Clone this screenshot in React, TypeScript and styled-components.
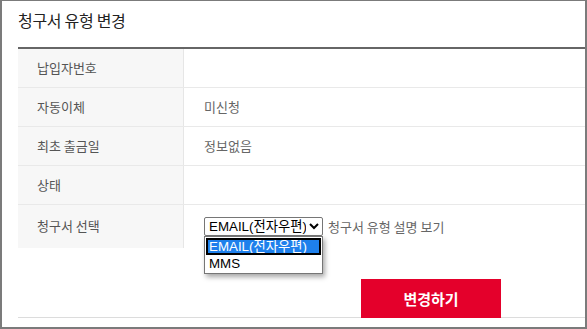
import React from 'react';
import styled, { createGlobalStyle } from 'styled-components';

const GlobalStyle = createGlobalStyle`
  html, body {
    margin: 0;
    padding: 0;
    background: #fff;
  }
  * {
    box-sizing: border-box;
  }
`;

const Frame = styled.div`
  width: 587px;
  height: 329px;
  border: 2px solid #7b7b7b;
  border-top-width: 1px;
  padding-left: 16px;
  background: #fff;
  font-family: 'Noto Sans CJK KR', 'Noto Sans', sans-serif;
  overflow: hidden;
`;

const Title = styled.h2`
  margin: 0;
  height: 46px;
  padding-top: 7px;
  font-size: 16px;
  line-height: 24px;
  font-weight: 400;
  color: #222;
  letter-spacing: -0.3px;
`;

const Table = styled.div`
  border-top: 2px solid #666;
`;

const Row = styled.div<{ $last?: boolean }>`
  display: grid;
  grid-template-columns: 166px 1fr;
  height: ${(p) => (p.$last ? '43px' : '39px')};
  border-bottom: ${(p) => (p.$last ? 'none' : '1px solid #e9e9e9')};
  align-items: stretch;
`;

const Label = styled.div<{ $top?: boolean }>`
  display: flex;
  align-items: ${(p) => (p.$top ? 'flex-start' : 'center')};
  padding: ${(p) => (p.$top ? '11px 0 0 19px' : '0 0 0 19px')};
  background: #f7f7f7;
  border-right: 1px solid #e6e6e6;
  font-size: 13px;
  line-height: 20px;
  color: #555;
`;

const Value = styled.div<{ $top?: boolean }>`
  display: flex;
  align-items: ${(p) => (p.$top ? 'flex-start' : 'center')};
  padding: ${(p) => (p.$top ? '12px 0 0 20px' : '0 0 0 20px')};
  font-size: 13px;
  line-height: 20px;
  color: #666;
`;

const SelectWrap = styled.div`
  position: relative;
  display: flex;
  align-items: center;
`;

const NativeSelect = styled.select`
  width: 119px;
  height: 19px;
  padding: 0;
  font-family: 'Liberation Sans', Arial, 'Noto Sans CJK KR', sans-serif;
  font-size: 13.33px;
  color: #000;
  border: 1px solid #767676;
  border-radius: 2px;
  background: #fff;
`;

const Hint = styled.span`
  margin-left: 5px;
  font-size: 13px;
  color: #666;
`;

const Dropdown = styled.ul`
  position: absolute;
  top: 19px;
  left: 0;
  width: 119px;
  margin: 0;
  padding: 1px;
  list-style: none;
  background: #fff;
  border: 1px solid #767676;
  box-shadow: 2px 3px 5px rgba(0, 0, 0, 0.35);
  font-family: 'Liberation Sans', Arial, 'Noto Sans CJK KR', sans-serif;
  font-size: 13.33px;
  z-index: 10;
`;

const Option = styled.li<{ $active?: boolean }>`
  height: 17px;
  line-height: 15px;
  padding: 0 2px;
  color: ${(p) => (p.$active ? '#fff' : '#000')};
  background: ${(p) => (p.$active ? '#1e80ec' : 'transparent')};
  border: 1px solid ${(p) => (p.$active ? '#000' : 'transparent')};
  outline: ${(p) => (p.$active ? '1px solid #000' : 'none')};
  outline-offset: -2px;
  white-space: nowrap;
`;

const Actions = styled.div`
  height: 70px;
  padding: 31px 0 0 343px;
  border-bottom: 1px solid #dcdcdc;
`;

const SubmitButton = styled.button`
  width: 140px;
  height: 39px;
  border: none;
  background: #e4002b;
  color: #fff;
  font-family: 'Noto Sans CJK KR', sans-serif;
  font-size: 15px;
  font-weight: 700;
  cursor: pointer;
`;

const rows = [
  { label: '납입자번호', value: '' },
  { label: '자동이체', value: '미신청' },
  { label: '최초 출금일', value: '정보없음' },
  { label: '상태', value: '' },
];

export default function App() {
  return (
    <>
      <GlobalStyle />
      <Frame>
        <Title>청구서 유형 변경</Title>
        <Table>
          {rows.map((r) => (
            <Row key={r.label}>
              <Label>{r.label}</Label>
              <Value>{r.value}</Value>
            </Row>
          ))}
          <Row $last>
            <Label $top>청구서 선택</Label>
            <Value $top>
              <SelectWrap>
                <NativeSelect defaultValue="email">
                  <option value="email">EMAIL(전자우편)</option>
                  <option value="mms">MMS</option>
                </NativeSelect>
                <Dropdown>
                  <Option $active>EMAIL(전자우편)</Option>
                  <Option>MMS</Option>
                </Dropdown>
              </SelectWrap>
              <Hint>청구서 유형 설명 보기</Hint>
            </Value>
          </Row>
        </Table>
        <Actions>
          <SubmitButton>변경하기</SubmitButton>
        </Actions>
      </Frame>
    </>
  );
}
